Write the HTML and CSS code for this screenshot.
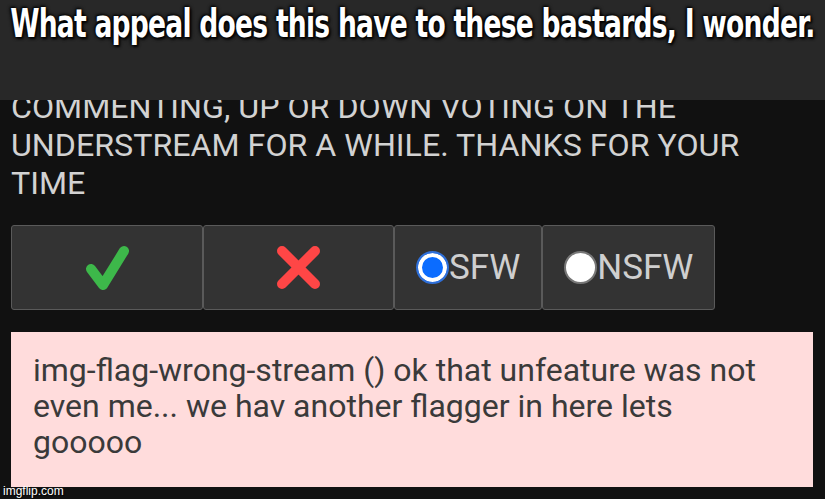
FILE: index.html
```html
<!DOCTYPE html>
<html lang="en">
<head>
    <meta charset="UTF-8">
    <meta name="viewport" content="width=device-width, initial-scale=1.0">
    <title>Understream</title>
    <link rel="stylesheet" href="styles.css">
</head>
<body>
    <div class="page">
        <!-- meme caption bar over the screenshot -->
        <div class="topbar">
            <div class="caption">What appeal does this have to these bastards, I wonder.</div>
        </div>

        <div class="content">
            <div class="notice">
                COMMENTING, UP OR DOWN VOTING ON THE<br>
                UNDERSTREAM FOR A WHILE. THANKS FOR YOUR<br>
                TIME
            </div>

            <div class="choices">
                <button class="choice wide">
                    <svg width="45" height="45" viewBox="0 0 45 45">
                        <polyline points="6,24 18,40 39,6" fill="none" stroke="#3db84a" stroke-width="10" stroke-linecap="round" stroke-linejoin="round"/>
                    </svg>
                </button>
                <button class="choice wide second">
                    <svg width="45" height="45" viewBox="0 0 45 45">
                        <path d="M6 6 L39 39 M39 6 L6 39" fill="none" stroke="#ff4646" stroke-width="10" stroke-linecap="round"/>
                    </svg>
                </button>
                <label class="choice">
                    <span class="radio checked"></span>SFW
                </label>
                <label class="choice">
                    <span class="radio"></span>NSFW
                </label>
            </div>

            <div class="comment">
                img-flag-wrong-stream () ok that unfeature was not<br>
                even me... we hav another flagger in here lets<br>
                gooooo
            </div>
        </div>

        <div class="watermark">imgflip.com</div>
    </div>
</body>
</html>
```

FILE: styles.css
```css
body {
    margin: 0;
    background-color: #111111;
    font-family: Roboto, "Noto Sans", sans-serif;
    overflow: hidden;
}
.page {
    position: relative;
    width: 825px;
    height: 499px;
    overflow: hidden;
}
.topbar {
    position: absolute;
    top: 0;
    left: 0;
    right: 0;
    height: 100px;
    background-color: #282828;
    z-index: 2;
    display: flex;
    justify-content: center;
    align-items: flex-start;
}
.caption {
    flex: none;
    white-space: nowrap;
    color: #ffffff;
    font-family: Impact, "DejaVu Sans Condensed", "DejaVu Sans", sans-serif;
    font-weight: bold;
    font-stretch: condensed;
    font-size: 39px;
    line-height: 38px;
    padding-top: 5px;
    letter-spacing: -1px;
    transform: scaleX(0.757);
    text-shadow: 2px 2px 3px #000, -1px -1px 3px #000, 0 0 5px #000;
}
.content {
    padding: 88px 12px 0 11px;
}
.notice {
    color: #d2d2d2;
    font-size: 32.2px;
    line-height: 38px;
}
.choices {
    display: flex;
    margin-top: 23px;
}
.choice {
    display: flex;
    align-items: center;
    justify-content: center;
    height: 85px;
    box-sizing: border-box;
    padding: 0 21px;
    background-color: #333333;
    border: 1px solid #5a5a5a;
    border-radius: 3px;
    color: #cfcfcf;
    font-family: Roboto, sans-serif;
    font-size: 35px;
}
.choice.wide {
    width: 192px;
    padding: 0;
}
.choice.second {
    width: 191px;
}
.radio {
    width: 33px;
    height: 33px;
    box-sizing: border-box;
    border-radius: 50%;
    background-color: #ffffff;
    border: 2px solid #777777;
}
.radio.checked {
    background-color: #0b6cff;
    border: 2px solid #2f6fd8;
    box-shadow: inset 0 0 0 4px #ffffff;
}
.comment {
    margin-top: 22px;
    height: 155px;
    box-sizing: border-box;
    padding: 20px 22px 0;
    background-color: #ffdcdc;
    color: #3a3a3a;
    font-size: 32px;
    line-height: 36px;
}
.watermark {
    position: absolute;
    left: 3px;
    bottom: 1px;
    color: #ffffff;
    font-family: "Liberation Sans", Arial, sans-serif;
    font-size: 12px;
    text-shadow: 1px 1px 1px #000;
}
```
